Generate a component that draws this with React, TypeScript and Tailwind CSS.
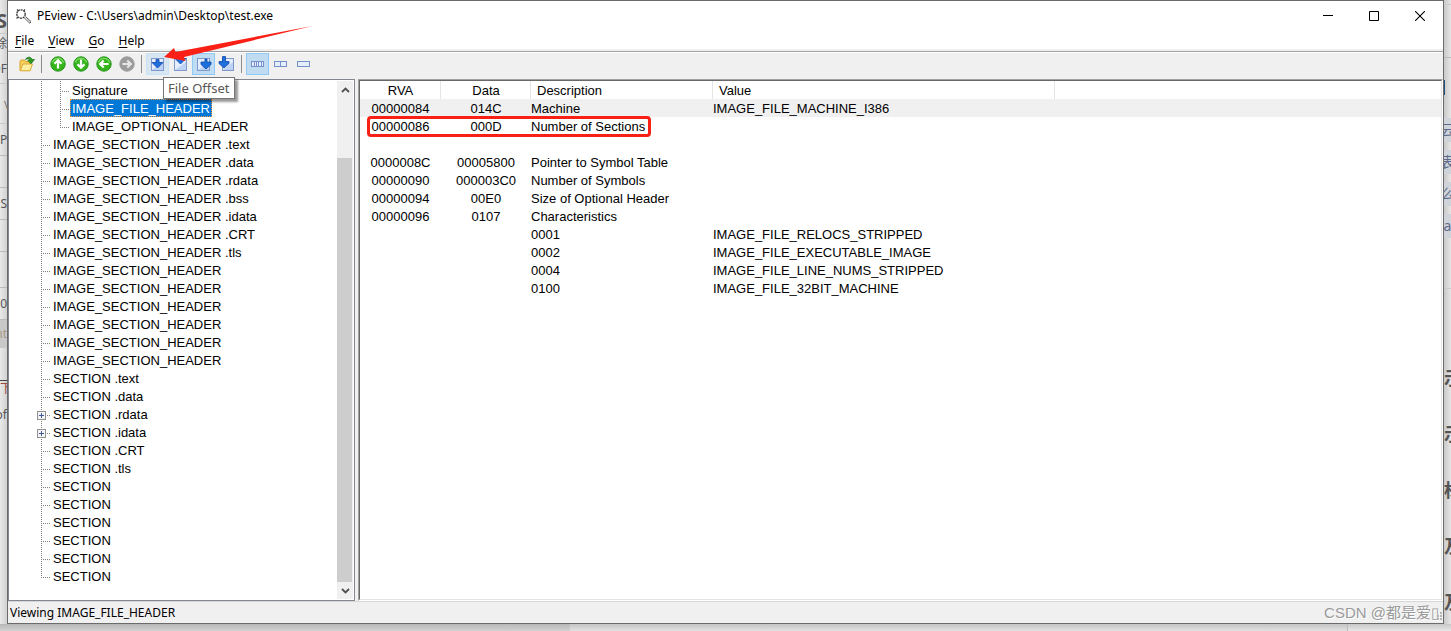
import React from 'react';

interface TreeItem {
  label: string;
  level: 1 | 2;
  last?: boolean;
  selected?: boolean;
  expandable?: boolean;
}

interface HeaderRow {
  rva?: string;
  data?: string;
  description?: string;
  value?: string;
  current?: boolean;
  marked?: boolean;
}

const treeItems: TreeItem[] = [
  { label: 'Signature', level: 2 },
  { label: 'IMAGE_FILE_HEADER', level: 2, selected: true },
  { label: 'IMAGE_OPTIONAL_HEADER', level: 2, last: true },
  { label: 'IMAGE_SECTION_HEADER .text', level: 1 },
  { label: 'IMAGE_SECTION_HEADER .data', level: 1 },
  { label: 'IMAGE_SECTION_HEADER .rdata', level: 1 },
  { label: 'IMAGE_SECTION_HEADER .bss', level: 1 },
  { label: 'IMAGE_SECTION_HEADER .idata', level: 1 },
  { label: 'IMAGE_SECTION_HEADER .CRT', level: 1 },
  { label: 'IMAGE_SECTION_HEADER .tls', level: 1 },
  { label: 'IMAGE_SECTION_HEADER', level: 1 },
  { label: 'IMAGE_SECTION_HEADER', level: 1 },
  { label: 'IMAGE_SECTION_HEADER', level: 1 },
  { label: 'IMAGE_SECTION_HEADER', level: 1 },
  { label: 'IMAGE_SECTION_HEADER', level: 1 },
  { label: 'IMAGE_SECTION_HEADER', level: 1 },
  { label: 'SECTION .text', level: 1 },
  { label: 'SECTION .data', level: 1 },
  { label: 'SECTION .rdata', level: 1, expandable: true },
  { label: 'SECTION .idata', level: 1, expandable: true },
  { label: 'SECTION .CRT', level: 1 },
  { label: 'SECTION .tls', level: 1 },
  { label: 'SECTION', level: 1 },
  { label: 'SECTION', level: 1 },
  { label: 'SECTION', level: 1 },
  { label: 'SECTION', level: 1 },
  { label: 'SECTION', level: 1 },
  { label: 'SECTION', level: 1, last: true },
];

const rows: HeaderRow[] = [
  { rva: '00000084', data: '014C', description: 'Machine', value: 'IMAGE_FILE_MACHINE_I386', current: true },
  { rva: '00000086', data: '000D', description: 'Number of Sections', marked: true },
  {},
  { rva: '0000008C', data: '00005800', description: 'Pointer to Symbol Table' },
  { rva: '00000090', data: '000003C0', description: 'Number of Symbols' },
  { rva: '00000094', data: '00E0', description: 'Size of Optional Header' },
  { rva: '00000096', data: '0107', description: 'Characteristics' },
  { description: '0001', value: 'IMAGE_FILE_RELOCS_STRIPPED' },
  { description: '0002', value: 'IMAGE_FILE_EXECUTABLE_IMAGE' },
  { description: '0004', value: 'IMAGE_FILE_LINE_NUMS_STRIPPED' },
  { description: '0100', value: 'IMAGE_FILE_32BIT_MACHINE' },
];

const DOTS_V = 'bg-[repeating-linear-gradient(to_bottom,#808080_0_1px,transparent_1px_2px)]';
const DOTS_H = 'bg-[repeating-linear-gradient(to_right,#808080_0_1px,transparent_1px_2px)]';

const AppIcon = () => (
  <svg width="17" height="17" viewBox="0 0 17 17" fill="none">
    <circle cx="6" cy="6" r="4.2" stroke="#333" strokeWidth="1.3" strokeDasharray="2 0.7" />
    <path d="M2 1.5l1.5 1.5M10 1.5L8.7 3M1.5 10.5L3 9" stroke="#444" strokeWidth="1.2" />
    <path d="M9 9.5l5.500 5.500M10.500 8.500l5.500 5" stroke="#555" strokeWidth="1" />
    <path d="M10 9.500l5 4.500" stroke="#ccc" strokeWidth="1" />
    <path d="M14.500 15.500l1.500-1.500" stroke="#555" />
  </svg>
);

const FolderIcon = () => (
  <svg width="16" height="16" viewBox="0 0 16 16">
    <path d="M1 14.500V5.500L2 4h3.500l1 1.500H11V14.500z" fill="#f6cf5c" stroke="#d9a32a" />
    <path d="M1.200 14.800L4 8h9.500l-2.500 6.800z" fill="#fdeea0" stroke="#dcab35" />
    <path d="M6.500 3.500C8 .5 12 .3 13 3.500h2.500L12 7.800 8.800 4.500l1.900-.5C10 2.500 8.500 2.500 6.500 3.500z" fill="#2a9a22" stroke="#176a14" strokeWidth=".7" />
  </svg>
);

const RoundArrow = ({ angle, disabled }: { angle: number; disabled?: boolean }) => (
  <svg width="16" height="16" viewBox="0 0 16 16">
    <circle cx="8" cy="8" r="7.2" fill={disabled ? '#9c9c9c' : '#35b51c'} stroke={disabled ? '#959595' : '#178a10'} strokeWidth=".9" />
    {!disabled && <path d="M2.500 6.500a5.700 5.700 0 0111 0" fill="none" stroke="#7fdc62" strokeWidth="1.2" />}
    <path
      d="M8 12.500V4.500M4.500 7.700L8 4.200l3.500 3.500"
      transform={`rotate(${angle} 8 8)`}
      fill="none"
      stroke={disabled ? '#e6e6e6' : '#fff'}
      strokeWidth="2.2"
    />
  </svg>
);

const Sheet = ({ x, width }: { x: number; width: number }) => (
  <>
    <rect x={x + 0.5} y="2.5" width={width - 1} height="12" fill="#e4eefc" stroke="#7f98cc" />
    <path d={`M${x + 1} 14L${x + width - 1} 6v8z`} fill="#bdd2f4" />
  </>
);

const OffsetIcon = ({ kind }: { kind: 'file' | 'address' | 'rva' | 'va' }) => (
  <svg width="17" height="16" viewBox="0 0 17 16">
    <Sheet x={kind === 'va' ? 4 : 2} width={kind === 'va' ? 12 : 13} />
    {kind === 'file' && <path d="M7 3.500h3v3h4L8.500 12 3 6.500h4z" fill="#1c6fdd" stroke="#0f47a8" strokeWidth=".8" />}
    {kind === 'address' && <path d="M3 2.500h11L8.500 8z" fill="#1c6fdd" stroke="#0f47a8" strokeWidth=".8" />}
    {kind === 'rva' && <path d="M10 3h2v3h4v2.500L11 13 6 8.500V6h4z" fill="#1c6fdd" stroke="#0f47a8" strokeWidth=".8" />}
    {kind === 'va' && <path d="M4.500.5h3v5H11V7.500L6 12 1 7.500v-2h3.500z" fill="#1c6fdd" stroke="#0f47a8" strokeWidth=".8" />}
  </svg>
);

const CellsIcon = ({ cuts }: { cuts: number[] }) => (
  <svg width="15" height="8" viewBox="0 0 15 8">
    <rect x="1.5" y="1.5" width="12" height="5" fill="#e4eefc" stroke="#7790cb" />
    {cuts.map(x => (
      <path key={x} d={`M${x}.5 2v4`} stroke="#7790cb" />
    ))}
  </svg>
);

interface ToolButtonProps {
  label: string;
  state?: 'hover' | 'pressed';
  children: React.ReactNode;
}

const ToolButton = ({ label, state, children }: ToolButtonProps) => (
  <button
    type="button"
    aria-label={label}
    className={`flex h-[22px] w-[23px] items-center justify-center border ${
      state === 'pressed' ? 'border-[#90c8f6] bg-[#c0dcf3]' : state === 'hover' ? 'border-[#c9e2f6] bg-[#d8e6f2]' : 'border-transparent'
    }`}
  >
    {children}
  </button>
);

const ToolSeparator = () => <span className="ml-[3px] mr-1 h-[18px] w-px bg-[#8c8c8c]" />;

const MenuItem = ({ label }: { label: string }) => (
  <button type="button" className="leading-5">
    <span className="underline underline-offset-2">{label[0]}</span>
    {label.slice(1)}
  </button>
);

const TreeRow = ({ item }: { item: TreeItem }) => (
  <li className="flex h-[18px] pl-8">
    {item.level === 2 && (
      <span className="w-[19px] shrink-0">
        <span className={`block h-full w-px ${DOTS_V}`} />
      </span>
    )}
    <span className="relative flex w-[10px] shrink-0">
      <span className={`w-px ${item.last ? 'h-[11px]' : 'h-full'} ${DOTS_V}`} />
      <span className={`ml-px mt-[10px] h-px w-[7px] ${DOTS_H}`} />
      {item.expandable && (
        <button
          type="button"
          aria-label={`Expand ${item.label}`}
          className="absolute -left-1 top-[6px] flex size-[9px] items-center justify-center border border-[#919191] bg-[#f4f4f4]"
        >
          <svg width="5" height="5" viewBox="0 0 5 5">
            <path d="M0 2.500h5M2.500 0v5" stroke="#3b5aa0" />
          </svg>
        </button>
      )}
    </span>
    <span
      className={`border px-px pt-[2px] leading-[14px] ${
        item.selected ? 'border-dotted border-[#ff9a3c] bg-[#0078d7] text-white' : 'border-transparent'
      }`}
    >
      {item.label}
    </span>
  </li>
);

const DesktopLeft = () => (
  <div className="w-[7px] shrink-0 overflow-hidden bg-linear-to-r from-[#e9e9e9] to-[#d2d2d2] text-xs text-[#555]">
    <div className="flex h-full w-[7px] flex-col items-end">
      <span className="flex h-[34px] items-end border-b border-[#c8c8c8] text-xl font-bold leading-6">S</span>
      <span className="h-5 leading-5">除</span>
      <span className="flex h-[30px] w-full items-center justify-end border-b border-[#c8c8c8]">DF</span>
      <span className="h-10 w-full border-b border-[#c8c8c8] pt-3 text-right">﹨</span>
      <span className="h-8 w-full border-b border-[#bbb] text-right leading-8">P</span>
      <span className="h-8 w-full border-b border-[#bbb]" />
      <span className="h-8 w-full border-b border-[#bbb] text-right leading-8">S</span>
      <span className="h-8 w-full border-b border-[#bbb]" />
      <span className="h-9 w-full border-b border-[#bbb]" />
      <span className="h-8 w-full border-b border-[#bbb] text-right leading-8">0</span>
      <span className="flex h-7 w-full items-center justify-end bg-[#c8c8c8] text-[#a79a86]">nt</span>
      <span className="mt-8 w-full border-t border-[#444] text-right leading-4 text-[#9a4a3a]">下</span>
      <span className="mt-2 leading-5">of</span>
    </div>
  </div>
);

const DesktopRight = () => (
  <div className="flex w-[7px] shrink-0 flex-col overflow-hidden bg-linear-to-r from-[#c9c9c9] to-[#e6e6e6] text-[#5e6b8c] *:shrink-0">
    <span className="h-[5px] border-b border-[#ccc]" />
    <span className="h-[53px] border-b border-[#bbb]" />
    <span className="mt-[22px] h-[15px] w-px bg-[#23517f]" />
    <div className="mt-[23px] flex flex-col gap-2">
      {['云', '表', '么', 'a'].map(text => (
        <span key={text} className="flex h-6 items-center justify-center overflow-hidden bg-[#cfd3da] text-sm">
          {text}
        </span>
      ))}
    </div>
    <span className="mt-[50px] border-t border-[#ccc]" />
    <div className="mt-[61px] flex flex-col text-lg font-bold text-[#555]">
      {['示', '示', '标', '及', '及'].map((text, i) => (
        <span key={i} className="flex h-14 shrink-0 items-center justify-start overflow-hidden">
          {text}
        </span>
      ))}
    </div>
  </div>
);

const App: React.FC = () => {
  return (
    <div className="flex h-screen flex-col overflow-hidden bg-[#dadada] font-['Noto_Sans','Noto_Sans_CJK_SC',sans-serif]">
      <div className="flex min-h-0 flex-1">
        <DesktopLeft />

        <main className="relative flex min-w-0 flex-1 flex-col border border-[#6b6b6b] bg-[#f0f0f0] text-xs text-black">
          <header className="flex h-[30px] shrink-0 items-center bg-white pl-[7px]">
            <AppIcon />
            <h1 className="ml-[5px] flex-1">PEview - C:\Users\admin\Desktop\test.exe</h1>
            <button type="button" aria-label="Minimize" className="flex h-full w-[46px] items-center justify-center">
              <svg width="10" height="10" viewBox="0 0 10 10"><path d="M0 4.500h10" stroke="#000" /></svg>
            </button>
            <button type="button" aria-label="Maximize" className="flex h-full w-[46px] items-center justify-center">
              <svg width="10" height="10" viewBox="0 0 10 10"><path d="M.5.5h9v9h-9z" fill="none" stroke="#000" /></svg>
            </button>
            <button type="button" aria-label="Close" className="flex h-full w-[46px] items-center justify-center">
              <svg width="10" height="10" viewBox="0 0 10 10"><path d="M0 0l10 10M10 0L0 10" stroke="#000" strokeWidth="1.1" /></svg>
            </button>
          </header>

          <nav className="flex h-[18px] shrink-0 gap-[14px] bg-white pl-[7px]">
            <MenuItem label="File" />
            <MenuItem label="View" />
            <MenuItem label="Go" />
            <MenuItem label="Help" />
          </nav>

          <div className="mt-[2px] flex h-7 shrink-0 items-center border-t border-[#a0a0a0] pb-1 pl-[7px] shadow-[inset_0_1px_0_#fff]">
            <ToolButton label="Open"><FolderIcon /></ToolButton>
            <ToolSeparator />
            <ToolButton label="Up"><RoundArrow angle={0} /></ToolButton>
            <ToolButton label="Down"><RoundArrow angle={180} /></ToolButton>
            <ToolButton label="Back"><RoundArrow angle={270} /></ToolButton>
            <ToolButton label="Forward"><RoundArrow angle={90} disabled /></ToolButton>
            <ToolSeparator />
            <div className="relative">
              <ToolButton label="File Offset" state="hover"><OffsetIcon kind="file" /></ToolButton>
              <div
                role="tooltip"
                className="absolute left-[17px] top-6 z-10 whitespace-nowrap border border-[#767676] bg-white px-1 text-[13px] leading-5 text-[#575757] shadow-[3px_3px_2px_rgba(0,0,0,0.4)]"
              >
                File Offset
              </div>
            </div>
            <ToolButton label="Address"><OffsetIcon kind="address" /></ToolButton>
            <ToolButton label="RVA" state="pressed"><OffsetIcon kind="rva" /></ToolButton>
            <ToolButton label="VA"><OffsetIcon kind="va" /></ToolButton>
            <ToolSeparator />
            <ToolButton label="Byte view" state="pressed"><CellsIcon cuts={[4, 6, 8, 11]} /></ToolButton>
            <ToolButton label="Word view"><CellsIcon cuts={[7]} /></ToolButton>
            <ToolButton label="Double word view"><CellsIcon cuts={[]} /></ToolButton>
          </div>

          <div className="flex min-h-0 flex-1 gap-[3px] font-['Liberation_Sans',Arial,sans-serif] text-[13px]">
            <aside className="flex w-[347px] shrink-0 border border-[#828790] bg-white py-px pr-px">
              <ul className="min-w-0 flex-1">
                {treeItems.map((item, index) => (
                  <TreeRow key={index} item={item} />
                ))}
              </ul>
              <div className="flex w-4 flex-col bg-[#f0f0f0]">
                <button type="button" aria-label="Scroll up" className="flex h-[17px] items-center justify-center">
                  <svg width="9" height="6" viewBox="0 0 9 6"><path d="M1 5l3.500-3.500L8 5" fill="none" stroke="#505050" strokeWidth="1.8" /></svg>
                </button>
                <span className="mt-[60px] mr-px flex-1 bg-[#cdcdcd]" />
                <button type="button" aria-label="Scroll down" className="flex h-[17px] items-center justify-center">
                  <svg width="9" height="6" viewBox="0 0 9 6"><path d="M1 1l3.500 3.500L8 1" fill="none" stroke="#505050" strokeWidth="1.8" /></svg>
                </button>
              </div>
            </aside>

            <section className="min-w-0 flex-1 border border-b-white border-l-[#a0a0a0] border-r-white border-t-[#a0a0a0]">
              <div className="h-full border border-b-[#e3e3e3] border-l-[#696969] border-r-[#e3e3e3] border-t-[#696969] bg-white">
                <table className="w-full table-fixed border-collapse whitespace-nowrap">
                  <colgroup>
                    <col className="w-[81px]" />
                    <col className="w-[90px]" />
                    <col className="w-[182px]" />
                    <col className="w-[342px]" />
                    <col />
                  </colgroup>
                  <thead>
                    <tr className="h-[18px] leading-4 *:p-0 *:pt-[2px] *:font-normal">
                      <th className="shadow-[inset_-1px_0_0_#e5e5e5]">RVA</th>
                      <th className="shadow-[inset_-1px_0_0_#e5e5e5]">Data</th>
                      <th className="text-left shadow-[inset_-1px_0_0_#e5e5e5]"><span className="pl-[6px]">Description</span></th>
                      <th className="text-left shadow-[inset_-1px_0_0_#e5e5e5]"><span className="pl-[6px]">Value</span></th>
                      <th />
                    </tr>
                  </thead>
                  <tbody>
                    {rows.map((row, index) => (
                      <tr key={index} className={`h-[18px] leading-4 *:p-0 *:pt-[2px] ${row.current ? 'bg-[#f0f0f0]' : ''}`}>
                        <td className="relative text-center">
                          {row.rva}
                          {row.marked && (
                            <span className="absolute left-[7px] -top-px z-10 h-[21px] w-[284px] rounded-[4px] border-[3px] border-[#fb2015]" />
                          )}
                        </td>
                        <td className="text-center">{row.data}</td>
                        <td>{row.description}</td>
                        <td>{row.value}</td>
                        <td />
                      </tr>
                    ))}
                  </tbody>
                </table>
              </div>
            </section>
          </div>

          <footer className="relative flex h-[22px] shrink-0 items-center border-t border-[#d7d7d7] pl-[2px] pr-1">
            <span className="flex-1">Viewing IMAGE_FILE_HEADER</span>
            <span className="font-['Liberation_Sans','Noto_Sans_CJK_SC',sans-serif] text-[15px] leading-5 text-[#9a9a9a] [text-shadow:1px_1px_0_#fff]">
              CSDN @都是爱▯
            </span>
            <svg className="absolute bottom-px right-0" width="8" height="10" viewBox="0 0 8 10" fill="#b4b4b4">
              <path d="M5 0h2v2H5zM2 3h2v2H2zM5 3h2v2H5zM2 6h2v2H2zM5 6h2v2H5z" />
            </svg>
          </footer>

          {/* callout arrow pointing at the File Offset button */}
          <svg className="pointer-events-none absolute left-[156px] top-6 z-20" width="150" height="38" viewBox="0 0 150 38">
            <path d="M0 32L10 23l1.500 4L148.500 1 20 32l1.500 4z" fill="#fb2015" />
          </svg>
        </main>

        <DesktopRight />
      </div>
      <div className="flex h-[7px] shrink-0">
        <span className="w-[39.3%] bg-linear-to-b from-[#b8b8b8] to-[#d2d2d2]" />
        <span className="w-[53.6%] border-r border-[#bbb] bg-linear-to-b from-[#c4c4c4] to-[#e2e2e2]" />
        <span className="flex-1 bg-linear-to-b from-[#c8c8c8] to-[#e8e8e8]" />
      </div>
    </div>
  );
};

export default App;
